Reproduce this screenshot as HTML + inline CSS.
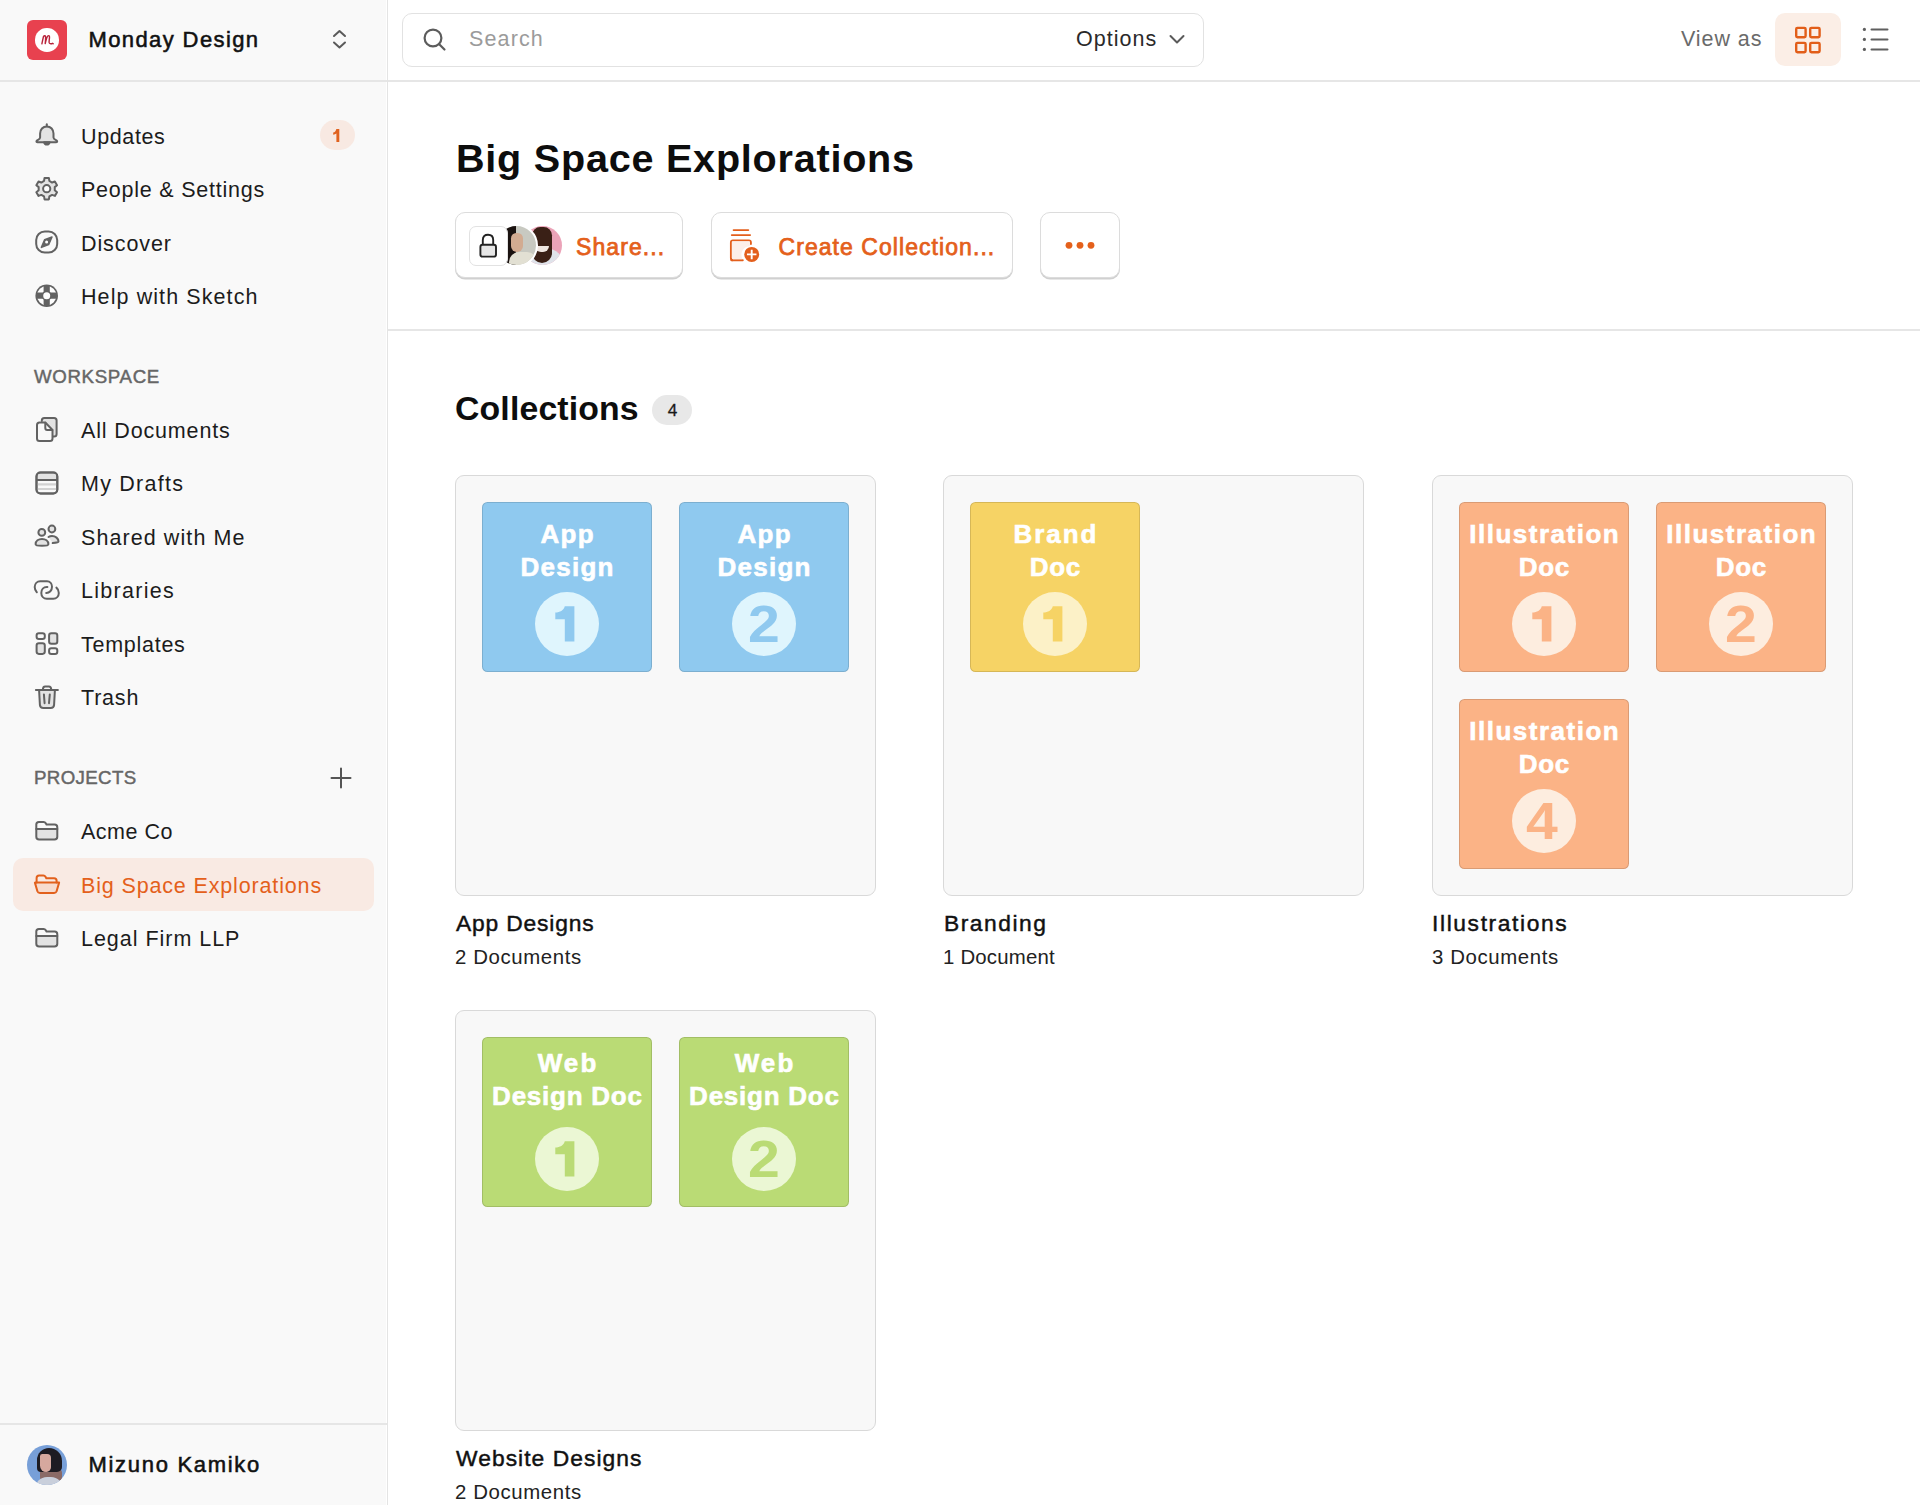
<!DOCTYPE html>
<html><head><meta charset="utf-8">
<style>
*{box-sizing:border-box;margin:0;padding:0}
html,body{width:1920px;height:1505px;overflow:hidden;background:#fff;font-family:"Liberation Sans",sans-serif;color:#1a1a1a}
.a{position:absolute;white-space:nowrap;line-height:1}
#side{position:absolute;left:0;top:0;width:386px;height:1505px;background:#f9f9f9}
.vl{position:absolute;width:1.5px;background:#e4e4e4}
.hl{position:absolute;height:1.5px;background:#e6e6e6}
.nav{position:absolute;left:81px;font-size:21.5px;line-height:1;color:#1c1c1c;white-space:nowrap;letter-spacing:0.9px}
.ic{position:absolute;left:30px;width:34px;height:34px;overflow:visible}
.ic *{stroke:#626262;stroke-width:2;fill:none;stroke-linejoin:round;stroke-linecap:round}
.ic .f{fill:#e3e3e3}
.sec{position:absolute;left:34px;font-size:18.7px;line-height:1;color:#666;letter-spacing:0.4px;-webkit-text-stroke:0.45px #666}
.btn{position:absolute;top:212px;height:66px;border:1.5px solid #dcdcdc;border-radius:10px;background:#fff;box-shadow:0 1.5px 0 #d0d0d0}
.btxt{position:absolute;font-size:23px;line-height:1;color:#e4601b;white-space:nowrap;-webkit-text-stroke:0.75px #e4601b}
.card{position:absolute;width:421px;height:421px;border:1.5px solid #d9d9d9;border-radius:9px;background:#f8f8f8}
.th{position:absolute;width:170.5px;height:170.5px;border-radius:5.5px;border:1px solid rgba(0,0,0,0.13);overflow:hidden}
.th .t{position:absolute;left:0;width:169px;text-align:center;color:#fff;font-weight:bold;font-size:26px;line-height:33.2px;letter-spacing:0.75px;white-space:nowrap;-webkit-text-stroke:0.6px #fff}
.th .c{position:absolute;left:52px;top:89px;width:64px;height:64px;border-radius:50%}
.th .n{position:absolute;left:52px;top:90.5px;width:64px;height:64px;text-align:center;font-weight:bold;font-size:51px;line-height:64px;transform:scaleX(1.12);transform-origin:32px 0}
.lbl{position:absolute;font-size:22.8px;line-height:1;color:#111;white-space:nowrap;-webkit-text-stroke:0.45px #111;letter-spacing:1.05px}
.sub{position:absolute;font-size:20.4px;line-height:1;color:#222;white-space:nowrap;letter-spacing:0.6px}
</style></head><body>
<div id="side">
  <!-- logo -->
  <div class="a" style="left:27px;top:20px;width:40px;height:40px;border-radius:6px;background:#e8414f"></div>
  <div class="a" style="left:35px;top:28px;width:23.5px;height:23.5px;border-radius:50%;background:#fff"></div>
  <svg class="a" style="left:0;top:0" width="70" height="70" viewBox="0 0 70 70"><path d="M41.9 43.8 C42.5 41 43 38.5 43.5 36.5 C44.4 35.3 45.5 35.5 45.6 36.9 C45.7 38.4 45.5 41 45.2 43.6 C46 40.2 46.7 37.2 47.8 36 C48.8 35.2 49.6 35.8 49.5 37.4 C49.4 39.5 48.7 41.6 49.3 43 C49.8 44 51.4 43.9 52.6 43.3" stroke="#b8223a" stroke-width="1.4" fill="none" stroke-linecap="round" stroke-linejoin="round"/><circle cx="53.2" cy="43.8" r="0.7" fill="#b8223a"/></svg>
  <div class="a" style="left:88.5px;top:29.1px;font-size:22px;color:#111;-webkit-text-stroke:0.55px #111;letter-spacing:1.39px">Monday Design</div>
  <svg class="a" style="left:330px;top:27px" width="20" height="26" viewBox="0 0 20 26"><path d="M4 9 L9.5 4 L15 9 M4 15.5 L9.5 20.5 L15 15.5" stroke="#5a5a5a" stroke-width="2" fill="none" stroke-linecap="round" stroke-linejoin="round"/></svg>
  <div class="hl" style="left:0;top:80px;width:387px"></div>

  <!-- nav items -->
  <svg class="ic" style="top:118px" viewBox="0 0 34 34"><path class="f" d="M16.8 8.4 C12.8 8.4 10.1 11.6 10.1 15.6 L10.1 19.6 C10.1 20.8 9.2 21.4 8 21.9 C6.9 22.4 6.4 23 6.4 23.5 C6.4 24 6.8 24.2 7.4 24.2 L26.2 24.2 C26.8 24.2 27.2 24 27.2 23.5 C27.2 23 26.7 22.4 25.6 21.9 C24.4 21.4 23.5 20.8 23.5 19.6 L23.5 15.6 C23.5 11.6 20.8 8.4 16.8 8.4Z"/><path d="M16.8 6.2 L16.8 8.2"/><path d="M14.1 24.3 A2.8 2.8 0 0 0 19.6 24.3Z" style="fill:#626262"/></svg>
  <div class="nav" style="top:126.5px;letter-spacing:0.63px">Updates</div>
  <div class="a" style="left:320px;top:120px;width:34.5px;height:30px;border-radius:15px;background:#f8e9e2"></div>
  <svg class="a" style="left:320px;top:120px" width="34" height="30" viewBox="0 0 34 30"><path d="M16.4 9 H19.3 V22.1 H16.4 V13.6 C15.6 14.2 14.5 14.6 13.2 14.7 V12.6 C14.8 12.3 15.9 11 16.4 9Z" fill="#e0621f"/></svg>

  <svg class="ic" style="top:172px" viewBox="0 0 34 34"><path class="f" d="M19.37 8.95 L18.87 6.02 L14.53 6.02 L14.03 8.95 L11.32 10.51 L8.54 9.48 L6.36 13.24 L8.65 15.14 L8.65 18.26 L6.36 20.16 L8.54 23.92 L11.32 22.89 L14.03 24.45 L14.53 27.38 L18.87 27.38 L19.37 24.45 L22.08 22.89 L24.86 23.92 L27.04 20.16 L24.75 18.26 L24.75 15.14 L27.04 13.24 L24.86 9.48 L22.08 10.51Z"/><circle cx="16.7" cy="16.7" r="3.6" style="fill:#fff"/></svg>
  <div class="nav" style="top:180.0px;letter-spacing:0.77px">People &amp; Settings</div>

  <svg class="ic" style="top:226px" viewBox="0 0 34 34"><rect x="6.2" y="5.5" width="21" height="21" rx="8.6" ry="8.6"/><path d="M22 11 L18.6 18.6 L11.4 21.4 L14.6 13.8Z" style="fill:#626262;stroke-width:1.5"/><circle cx="16.6" cy="16.1" r="1.5" style="fill:#fff;stroke:none"/></svg>
  <div class="nav" style="top:233.5px;letter-spacing:0.91px">Discover</div>

  <svg class="a" style="left:30px;top:279px" width="34" height="34" viewBox="0 0 34 34"><defs><clipPath id="lbc"><rect x="19.8" y="0" width="15" height="13.6"/><rect x="0" y="0" width="13.6" height="13.6"/><rect x="0" y="19.8" width="13.6" height="15"/><rect x="19.8" y="19.8" width="15" height="15"/></clipPath></defs><circle cx="16.7" cy="16.7" r="11.3" fill="#626262"/><circle cx="16.7" cy="16.7" r="3.5" fill="#fdfdfd"/><circle cx="16.7" cy="16.7" r="7.35" stroke="#fdfdfd" stroke-width="4.7" fill="none" clip-path="url(#lbc)"/></svg>
  <div class="nav" style="top:287.0px;letter-spacing:1.09px">Help with Sketch</div>

  <div class="sec" style="top:367.7px;letter-spacing:0.65px">WORKSPACE</div>

  <svg class="ic" style="top:413px" viewBox="0 0 34 34"><path class="f" d="M11.8 8 L11.8 7.5 C11.8 6 12.8 5 14.3 5 L24.1 5 C25.6 5 26.6 6 26.6 7.5 L26.6 21 C26.6 22.5 25.6 23.5 24.1 23.5 L22.5 23.5"/><path style="fill:#f9f9f9" d="M9.5 9.5 L15.3 9.5 L22.5 17 L22.5 25.5 C22.5 27 21.5 28 20 28 L9.5 28 C8 28 7 27 7 25.5 L7 12 C7 10.5 8 9.5 9.5 9.5Z"/><path d="M15.3 9.8 L15.3 15 C15.3 16.2 16 17 17.2 17 L22.3 17"/></svg>
  <div class="nav" style="top:420.7px;letter-spacing:0.85px">All Documents</div>

  <svg class="ic" style="top:467px" viewBox="0 0 34 34"><rect x="6.5" y="5.5" width="20.8" height="21" rx="4"/><path style="fill:#e3e3e3;stroke:none" d="M8 7 L26 7 L26 12.5 L8 12.5Z"/><path style="stroke:#d2d2d2;stroke-width:2.2" d="M8.5 17.3 L25.5 17.3 M8.5 22 L25.5 22"/><rect x="6.5" y="5.5" width="20.8" height="21" rx="4"/><path d="M6.8 13 L27 13"/></svg>
  <div class="nav" style="top:474.2px;letter-spacing:1.24px">My Drafts</div>

  <svg class="ic" style="top:520px" viewBox="0 0 34 34"><circle cx="11.8" cy="12.4" r="3.4" class="f"/><circle cx="21.9" cy="9" r="3.4" class="f"/><path class="f" d="M5.6 24.3 C5.6 21 8.6 19 12 19 C15.4 19 18.4 21 18.4 24.3 C18.4 26.3 5.6 26.3 5.6 24.3Z"/><path class="f" d="M18.5 17 C19.5 16.3 20.6 16 22 16 C25.5 16 28.5 18.5 28.5 21.5 C28.5 22.3 25 23 22.7 23.1" /></svg>
  <div class="nav" style="top:527.7px;letter-spacing:1.08px">Shared with Me</div>

  <svg class="ic" style="top:574px" viewBox="0 0 34 34"><path d="M6.8 18.2 C5.4 16.8 4.7 15 4.7 13 C4.7 9.6 7.2 7.2 10.2 7.2 L17 7.2 C20 7.2 22 9.7 22 12.8 C22 16.3 19.5 19 16.3 19 L16.2 19"/><path d="M17.4 13.1 L16.8 13.1 C13.6 13.1 11.3 15.6 11.3 18.9 C11.3 22.2 13.7 24.7 16.8 24.7 L23.3 24.7 C26.4 24.7 28.8 22.2 28.8 19 C28.8 16.8 27.9 14.8 26.4 13.6"/></svg>
  <div class="nav" style="top:581.2px;letter-spacing:1.29px">Libraries</div>

  <svg class="ic" style="top:627px" viewBox="0 0 34 34"><rect x="6.6" y="6.2" width="8.2" height="5.8" rx="2.3"/><rect x="19.1" y="6.2" width="8.2" height="10.6" rx="2.3" class="f"/><rect x="6.6" y="16.3" width="8.2" height="10.6" rx="2.3" class="f"/><rect x="19.1" y="21.2" width="8.2" height="5.8" rx="2.3"/></svg>
  <div class="nav" style="top:634.7px;letter-spacing:0.73px">Templates</div>

  <svg class="ic" style="top:681px" viewBox="0 0 34 34"><path class="f" d="M9.1 9.2 L9.9 23.8 C10.1 25.8 11.5 27 13.3 27 L20.7 27 C22.5 27 23.9 25.8 24.1 23.8 L24.9 9.2"/><path d="M5.9 9.1 L27.9 9.1 M12.9 8.8 C12.9 6.3 13.6 5.5 15.2 5.5 L18.9 5.5 C20.5 5.5 21.1 6.3 21.3 8.8 M13.9 13.4 L14.6 22.2 M19.8 13.4 L19 22.2"/></svg>
  <div class="nav" style="top:688.2px;letter-spacing:0.8px">Trash</div>

  <div class="sec" style="top:769px;letter-spacing:0.35px">PROJECTS</div>
  <svg class="a" style="left:329px;top:766px" width="24" height="24" viewBox="0 0 24 24"><path d="M12 2.5 V21.5 M2.5 12 H21.5" stroke="#555" stroke-width="2" stroke-linecap="round"/></svg>

  <svg class="ic" style="top:815px" viewBox="0 0 34 34"><path class="f" d="M6.3 13.9 L27.3 13.9 L27.3 21.8 C27.3 23.5 26.1 24.6 24.5 24.6 L9.1 24.6 C7.5 24.6 6.3 23.5 6.3 21.8Z"/><path d="M6.3 13.9 L6.3 9.6 C6.3 8 7.3 6.9 8.9 6.9 L13.6 6.9 C14.6 6.9 15.3 7.4 15.8 8.2 L16.5 9.5 L24.6 9.5 C26.2 9.5 27.3 10.6 27.3 12.2 L27.3 13.9 M6.3 13.9 L27.3 13.9"/></svg>
  <div class="nav" style="top:821.9px;letter-spacing:0.49px">Acme Co</div>

  <div class="a" style="left:13px;top:858px;width:361px;height:53px;border-radius:10px;background:#f9eae3"></div>
  <svg class="ic" style="top:868px" viewBox="0 0 34 34"><path style="stroke:#e2601c;fill:#f7dccf" d="M4.9 14.6 L29.1 14.6 L26.6 23.2 C26.2 24.4 25.3 25 24 25 L10 25 C8.7 25 7.8 24.4 7.4 23.2Z"/><path style="stroke:#e2601c" d="M6.6 14.4 L6.6 10 C6.6 8.5 7.6 7.5 9.1 7.5 L13.4 7.5 C14.4 7.5 15 7.9 15.5 8.7 L16.3 10.3 L24.1 10.3 C25.6 10.3 26.6 11.3 26.6 12.8 L26.6 14.4"/></svg>
  <div class="nav" style="top:875.9px;color:#e4601b;letter-spacing:0.85px">Big Space Explorations</div>

  <svg class="ic" style="top:922px" viewBox="0 0 34 34"><path class="f" d="M6.3 13.9 L27.3 13.9 L27.3 21.8 C27.3 23.5 26.1 24.6 24.5 24.6 L9.1 24.6 C7.5 24.6 6.3 23.5 6.3 21.8Z"/><path d="M6.3 13.9 L6.3 9.6 C6.3 8 7.3 6.9 8.9 6.9 L13.6 6.9 C14.6 6.9 15.3 7.4 15.8 8.2 L16.5 9.5 L24.6 9.5 C26.2 9.5 27.3 10.6 27.3 12.2 L27.3 13.9 M6.3 13.9 L27.3 13.9"/></svg>
  <div class="nav" style="top:928.7px;letter-spacing:0.97px">Legal Firm LLP</div>

  <div class="hl" style="left:0;top:1423px;width:387px"></div>
  <div class="a" style="left:27px;top:1445px;width:40px;height:40px;border-radius:50%;overflow:hidden;background:#779fd8">
    <div class="a" style="left:13px;top:24px;width:22px;height:12px;border-radius:4px;background:#8a6a66"></div>
    <div class="a" style="left:8px;top:32px;width:28px;height:14px;border-radius:12px 12px 0 0;background:#c9cfdb"></div>
    <div class="a" style="left:10px;top:3px;width:25px;height:24px;border-radius:12px 13px 5px 4px;background:#1d1b22"></div>
    <div class="a" style="left:13px;top:9px;width:11px;height:18px;border-radius:3px 5px 6px 8px;background:#d6a89e"></div>
  </div>
  <div class="a" style="left:88.5px;top:1454.4px;font-size:22px;color:#111;-webkit-text-stroke:0.55px #111;letter-spacing:1.7px">Mizuno Kamiko</div>
</div>
<div class="vl" style="left:386.5px;top:0;height:1505px"></div>

<!-- header -->
<div class="hl" style="left:388px;top:80px;width:1532px"></div>
<div class="a" style="left:402px;top:13px;width:802px;height:53.5px;border:1.5px solid #e2e2e2;border-radius:10px;background:#fff"></div>
<svg class="a" style="left:418px;top:22px" width="34" height="34" viewBox="0 0 34 34"><circle cx="15" cy="16" r="8.4" stroke="#5c5c5c" stroke-width="2.2" fill="none"/><path d="M21 22 L26.5 27.5" stroke="#5c5c5c" stroke-width="2.2" stroke-linecap="round"/></svg>
<div class="nav" style="left:469px;top:29.2px;color:#9b9b9b;letter-spacing:1.14px">Search</div>
<div class="nav" style="left:1076px;top:29.2px;color:#2a2a2a;letter-spacing:1.03px">Options</div>
<svg class="a" style="left:1165px;top:28px" width="24" height="24" viewBox="0 0 24 24"><path d="M5.5 8 L12 14.5 L18.5 8" stroke="#5a5a5a" stroke-width="2" fill="none" stroke-linecap="round" stroke-linejoin="round"/></svg>
<div class="nav" style="left:1681px;top:29.2px;color:#6a6a6a;letter-spacing:0.92px">View as</div>
<div class="a" style="left:1775px;top:13px;width:66px;height:53px;border-radius:10px;background:#fbeee6"></div>
<svg class="a" style="left:1790px;top:22px" width="36" height="36" viewBox="0 0 36 36"><g stroke="#e25e19" stroke-width="2.4" fill="none"><rect x="6.2" y="5.9" width="9.4" height="9.4" rx="1.2"/><rect x="20.2" y="5.9" width="9.4" height="9.4" rx="1.2"/><rect x="6.2" y="20.9" width="9.4" height="9.4" rx="1.2"/><rect x="20.2" y="20.9" width="9.4" height="9.4" rx="1.2"/></g></svg>
<svg class="a" style="left:1856px;top:21px" width="40" height="40" viewBox="0 0 40 40"><g fill="#5f5f5f"><circle cx="8.4" cy="8.4" r="1.6"/><circle cx="8.4" cy="18.4" r="1.6"/><circle cx="8.4" cy="28.4" r="1.6"/></g><path d="M15.5 8.4 H31.5 M15.5 18.4 H31.5 M15.5 28.4 H31.5" stroke="#5f5f5f" stroke-width="2" stroke-linecap="round"/></svg>

<!-- title -->
<div class="a" style="left:456px;top:138.5px;font-size:39.6px;font-weight:bold;color:#0d0d0d;letter-spacing:0.76px">Big Space Explorations</div>

<!-- buttons -->
<div class="btn" style="left:455px;width:228px"></div>
<div class="a" style="left:523px;top:226px;width:39px;height:39px;border-radius:50%;overflow:hidden;background:#eba3b8">
  <div class="a" style="left:-2px;top:22px;width:44px;height:20px;border-radius:20px 20px 0 0;background:#dfe3ea"></div>
  <div class="a" style="left:9px;top:1px;width:20px;height:36px;border-radius:10px 10px 12px 12px;background:#3a2016"></div>
  <div class="a" style="left:12px;top:20px;width:14px;height:6px;border-radius:0 0 7px 7px;background:#efe6e0"></div>
</div>
<div class="a" style="left:495px;top:224px;width:43px;height:43px;border-radius:50%;overflow:hidden;background:#c8c9c1;border:2px solid #fff">
  <div class="a" style="left:-1px;top:0;width:20px;height:40px;background:#1a1210"></div>
  <div class="a" style="left:14px;top:7px;width:12px;height:19px;border-radius:6px 6px 7px 7px;background:#d2ab91"></div>
  <div class="a" style="left:12px;top:26px;width:28px;height:16px;border-radius:10px 10px 0 0;background:#e2e0d3"></div>
</div>
<div class="a" style="left:469px;top:226px;width:39px;height:39.5px;border:1.5px solid #e2e2e2;border-radius:7px;background:#fff"></div>
<svg class="a" style="left:471px;top:226px" width="34" height="40" viewBox="0 0 34 40"><path d="M11.8 18.5 L11.8 14 C11.8 10.3 13.9 8.8 17 8.8 C20.1 8.8 22.2 10.3 22.2 14 L22.2 18.5" stroke="#222" stroke-width="1.9" fill="none"/><rect x="9.4" y="18.8" width="15.6" height="11.8" rx="2.2" stroke="#222" stroke-width="1.9" fill="#e6e6e6"/></svg>
<div class="btxt" style="left:576px;top:235.5px;letter-spacing:1.08px">Share...</div>

<div class="btn" style="left:711px;width:302px"></div>
<svg class="a" style="left:722px;top:222px" width="44" height="46" viewBox="0 0 44 46"><path d="M9.4 38.3 L20.8 38.3 M8.9 36 L8.9 20.4 C8.9 19.1 9.6 18.4 10.9 18.4 L26.9 18.4 C28.2 18.4 28.9 19.1 28.9 20.4 L28.9 22" stroke="#e35f1c" stroke-width="1.9" fill="none" stroke-linecap="round"/><path d="M9.9 19.4 H27.9 V24 A9 9 0 0 0 20.5 37.3 H9.9Z" fill="#fcefe8"/><path d="M8.9 36 C8.9 37.5 9.6 38.3 10.9 38.3" stroke="#e35f1c" stroke-width="1.9" fill="none"/><path d="M11.6 8.1 H26.3 M9.8 13.1 H28.1" stroke="#e35f1c" stroke-width="1.9" stroke-linecap="round"/><circle cx="29.7" cy="32.4" r="7.5" fill="#e35f1c"/><path d="M29.7 28.6 V36.2 M25.9 32.4 H33.5" stroke="#fff" stroke-width="1.9" stroke-linecap="square"/></svg>
<div class="btxt" style="left:778.5px;top:235.7px;letter-spacing:1.06px">Create Collection...</div>

<div class="btn" style="left:1040px;width:80px"></div>
<svg class="a" style="left:1060px;top:235px" width="40" height="20" viewBox="0 0 40 20"><g fill="#e4601b"><circle cx="9" cy="10.3" r="3.4"/><circle cx="20" cy="10.3" r="3.4"/><circle cx="31" cy="10.3" r="3.4"/></g></svg>

<div class="hl" style="left:388px;top:329px;width:1532px"></div>

<!-- collections -->
<div class="a" style="left:455px;top:391.5px;font-size:33.8px;font-weight:bold;color:#0d0d0d;letter-spacing:0.15px">Collections</div>
<div class="a" style="left:652px;top:394.5px;width:40px;height:30px;border-radius:15px;background:#e8e8e8"></div>
<div class="a" style="left:652.5px;top:402px;width:40px;text-align:center;font-size:17.2px;color:#1a1a1a;-webkit-text-stroke:0.3px #1a1a1a">4</div>

<!-- card 1 -->
<div class="card" style="left:455px;top:475px"></div>
<div class="th" style="left:481.5px;top:501.5px;background:#8fc9ef"><div class="t" style="top:15.3px"><span style="letter-spacing:1.25px;margin-right:-1.25px">App</span><br><span style="letter-spacing:1.23px;margin-right:-1.23px">Design</span></div><div class="c" style="background:#dff5fd"></div><svg class="n1" width="169" height="169" viewBox="0 0 169 169" style="position:absolute;left:0;top:0"><path d="M81.8 103.3 H91.4 V138.6 H81.8 V116.2 H72.3 V109.6 C77 109.5 80.6 107.5 81.8 103.3Z" fill="#8fc9ef"/></svg></div>
<div class="th" style="left:678.5px;top:501.5px;background:#8fc9ef"><div class="t" style="top:15.3px"><span style="letter-spacing:1.25px;margin-right:-1.25px">App</span><br><span style="letter-spacing:1.23px;margin-right:-1.23px">Design</span></div><div class="c" style="background:#dff5fd"></div><div class="n" style="color:#8fc9ef">2</div></div>
<div class="lbl" style="left:456px;top:912px;letter-spacing:0.84px">App Designs</div>
<div class="sub" style="left:455px;top:946.5px">2 Documents</div>

<!-- card 2 -->
<div class="card" style="left:943px;top:475px"></div>
<div class="th" style="left:969.5px;top:501.5px;background:#f6d365"><div class="t" style="top:15.3px"><span style="letter-spacing:1.95px;margin-right:-1.95px">Brand</span><br><span style="letter-spacing:0.75px;margin-right:-0.75px">Doc</span></div><div class="c" style="background:#fcf1c7"></div><svg class="n1" width="169" height="169" viewBox="0 0 169 169" style="position:absolute;left:0;top:0"><path d="M81.8 103.3 H91.4 V138.6 H81.8 V116.2 H72.3 V109.6 C77 109.5 80.6 107.5 81.8 103.3Z" fill="#f6d365"/></svg></div>
<div class="lbl" style="left:944px;top:912px;letter-spacing:1.51px">Branding</div>
<div class="sub" style="left:943px;top:946.5px;letter-spacing:0.2px">1 Document</div>

<!-- card 3 -->
<div class="card" style="left:1432px;top:475px"></div>
<div class="th" style="left:1458.5px;top:501.5px;background:#fbb386"><div class="t" style="top:15.3px"><span style="letter-spacing:1.5px;margin-right:-1.5px">Illustration</span><br><span style="letter-spacing:0.75px;margin-right:-0.75px">Doc</span></div><div class="c" style="background:#fdeddf"></div><svg class="n1" width="169" height="169" viewBox="0 0 169 169" style="position:absolute;left:0;top:0"><path d="M81.8 103.3 H91.4 V138.6 H81.8 V116.2 H72.3 V109.6 C77 109.5 80.6 107.5 81.8 103.3Z" fill="#fbb386"/></svg></div>
<div class="th" style="left:1655.5px;top:501.5px;background:#fbb386"><div class="t" style="top:15.3px"><span style="letter-spacing:1.5px;margin-right:-1.5px">Illustration</span><br><span style="letter-spacing:0.75px;margin-right:-0.75px">Doc</span></div><div class="c" style="background:#fdeddf"></div><div class="n" style="color:#fbb386">2</div></div>
<div class="th" style="left:1458.5px;top:698.5px;background:#fbb386"><div class="t" style="top:15.3px"><span style="letter-spacing:1.5px;margin-right:-1.5px">Illustration</span><br><span style="letter-spacing:0.75px;margin-right:-0.75px">Doc</span></div><div class="c" style="background:#fdeddf"></div><div class="n" style="color:#fbb386;left:50px">4</div></div>
<div class="lbl" style="left:1432px;top:912px;letter-spacing:1.62px">Illustrations</div>
<div class="sub" style="left:1432px;top:946.5px">3 Documents</div>

<!-- card 4 -->
<div class="card" style="left:455px;top:1010px"></div>
<div class="th" style="left:481.5px;top:1036.5px;background:#badb75"><div class="t" style="top:9.6px"><span style="letter-spacing:2.1px;margin-right:-2.1px">Web</span><br><span style="letter-spacing:0.75px;margin-right:-0.75px">Design Doc</span></div><div class="c" style="background:#ebf7d4"></div><svg class="n1" width="169" height="169" viewBox="0 0 169 169" style="position:absolute;left:0;top:0"><path d="M81.8 103.3 H91.4 V138.6 H81.8 V116.2 H72.3 V109.6 C77 109.5 80.6 107.5 81.8 103.3Z" fill="#badb75"/></svg></div>
<div class="th" style="left:678.5px;top:1036.5px;background:#badb75"><div class="t" style="top:9.6px"><span style="letter-spacing:2.1px;margin-right:-2.1px">Web</span><br><span style="letter-spacing:0.75px;margin-right:-0.75px">Design Doc</span></div><div class="c" style="background:#ebf7d4"></div><div class="n" style="color:#badb75">2</div></div>
<div class="lbl" style="left:456px;top:1447px;letter-spacing:1.06px">Website Designs</div>
<div class="sub" style="left:455px;top:1481.5px">2 Documents</div>
</body></html>
